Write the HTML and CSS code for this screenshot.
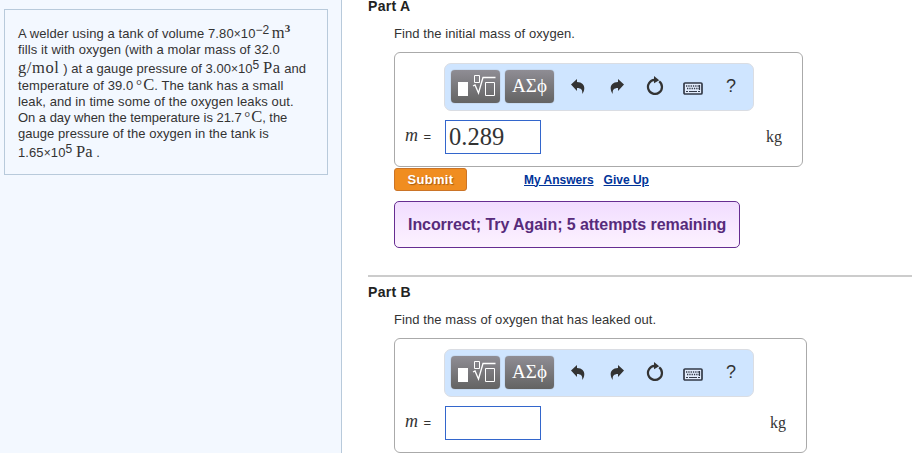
FILE: index.html
```
<!DOCTYPE html>
<html>
  <head>
    <meta charset="utf-8">
    <title>Mass of oxygen</title>
    <link rel="stylesheet" href="styles.css">
  </head>
  <body>
    <svg class="defs" width="0" height="0">
      <symbol id="template" viewBox="0 0 49 33">
        <path d="M7 12h10v14h-10z" fill="#fff"/>
        <path d="M23.500 5.500h5v7h-5zM34.500 12.500h9v13h-9z" fill="none" stroke="#fff"/>
        <path d="M22 16l2-1 3.500 8 4.500-15.500h12.500" fill="none" stroke="#fff" stroke-width="1.300"/>
      </symbol>
      <symbol id="undo" viewBox="0 0 14 15">
        <path d="M0 5.500L6 0v3c5 0 7.500 3 7.300 6.500-.1 2-.9 4-2.100 5.500.6-4-1-6-5.200-6v3z"/>
      </symbol>
      <symbol id="reset" viewBox="0 0 18 19">
        <path d="M13.200 5.300A7 7 0 1 1 8.500 3.900" fill="none" stroke="#333" stroke-width="2.200"/>
        <path d="M8 0l5.200 4.200L8 7.300z"/>
      </symbol>
      <symbol id="keyboard" viewBox="0 0 20 13">
        <rect x="1" y="1" width="18" height="11" rx="1" fill="#e2ecfc" stroke="#333a48" stroke-width="1.700"/>
        <path d="M3 4h14M4 6.500h12" stroke="#333a48" stroke-width="1.400" stroke-dasharray="1.300 1"/>
        <path d="M3 9.500h2M6 9.500h8M15 9.500h2M16.500 3v5" stroke="#333a48" stroke-width="1.200"/>
      </symbol>
    </svg>
    <div class="page">
      <div class="sidebar">
        <div class="problem">
          <div class="line l1">A welder using a tank of volume 7.80<span class="times">×</span>10<sup>−2</sup> <span class="unit">m<sup>3</sup></span></div>
          <div class="line">fills it with oxygen (with a molar mass of 32.0</div>
          <div class="line tall l3"><span class="unit">g/mol</span> ) at a gauge pressure of 3.00<span class="times">×</span>10<sup>5</sup> <span class="unit">Pa</span> and</div>
          <div class="line">temperature of 39.0 <span class="unit"><span class="deg">°</span>C</span>. The tank has a small</div>
          <div class="line l5">leak, and in time some of the oxygen leaks out.</div>
          <div class="line l6">On a day when the temperature is 21.7 <span class="unit"><span class="deg">°</span>C</span>, the</div>
          <div class="line l7">gauge pressure of the oxygen in the tank is</div>
          <div class="line tall">1.65<span class="times">×</span>10<sup>5</sup> <span class="unit">Pa</span> .</div>
        </div>
      </div>
      <div class="parts">
        <div class="part">
          <div class="title">Part A</div>
          <div class="question">Find the initial mass of oxygen.</div>
          <div class="answer">
            <div class="toolbar">
              <div class="btn"><svg width="49" height="33"><use href="#template"/></svg></div>
              <div class="btn greek">ΑΣϕ</div>
              <svg class="icon undo" width="14" height="15"><use href="#undo"/></svg>
              <svg class="icon redo" width="14" height="15"><use href="#undo"/></svg>
              <svg class="icon reset" width="18" height="19"><use href="#reset"/></svg>
              <svg class="icon keys" width="20" height="13"><use href="#keyboard"/></svg>
              <span class="help">?</span>
            </div>
            <div class="entry">
              <span class="label"><i>m</i> =</span>
              <div class="field">0.289</div>
              <span class="kg">kg</span>
            </div>
          </div>
          <div class="actions">
            <div class="submit">Submit</div>
            <a class="my-answers" href="#">My Answers</a>
            <a class="give-up" href="#">Give Up</a>
          </div>
          <div class="feedback">Incorrect; Try Again; 5 attempts remaining</div>
        </div>
        <div class="part part-b">
          <div class="title">Part B</div>
          <div class="question">Find the mass of oxygen that has leaked out.</div>
          <div class="answer wide">
            <div class="toolbar">
              <div class="btn"><svg width="49" height="33"><use href="#template"/></svg></div>
              <div class="btn greek">ΑΣϕ</div>
              <svg class="icon undo" width="14" height="15"><use href="#undo"/></svg>
              <svg class="icon redo" width="14" height="15"><use href="#undo"/></svg>
              <svg class="icon reset" width="18" height="19"><use href="#reset"/></svg>
              <svg class="icon keys" width="20" height="13"><use href="#keyboard"/></svg>
              <span class="help">?</span>
            </div>
            <div class="entry">
              <span class="label"><i>m</i> =</span>
              <div class="field"></div>
              <span class="kg">kg</span>
            </div>
          </div>
        </div>
      </div>
    </div>
  </body>
</html>
```
FILE: styles.css
```
* {
  box-sizing: border-box;
}
body {
  margin: 0;
  background-color: #FFF;
  color: #333;
  font: 13px/16px "Liberation Sans", Arial, sans-serif;
  overflow: hidden;
}
.defs {
  display: block;
}
.page {
  display: flex;
  height: 453px;
}
.sidebar {
  flex: none;
  width: 342px;
  padding: 9px 0 0 4px;
  border-right: 1px solid #B8CADB;
  background-color: #F3F8FF;
}
.problem {
  width: 324px;
  height: 166px;
  padding: 16px 0 0 13px;
  border: 1px solid #B8CADB;
}
.line {
  height: 16px;
  letter-spacing: 0.1px;
  white-space: nowrap;
}
.tall {
  height: 19px;
  padding-top: 3px;
}
.l1 { letter-spacing: 0.09px; }
.l3 {
  height: 20px;
  letter-spacing: 0.03px;
}
.l6 { letter-spacing: -0.03px; }
.l7 { letter-spacing: 0.05px; }
.line sup {
  font-size: 12px;
  letter-spacing: 0;
  line-height: 0;
  vertical-align: 4px;
}
.times {
  font-size: 12px;
}
.unit {
  font-family: "Liberation Serif", "Times New Roman", serif;
  font-size: 16.5px;
  line-height: 0;
}
.l3 .unit {
  letter-spacing: 0.6px;
}
.line .unit sup {
  font-size: 11px;
  font-weight: bold;
  vertical-align: 6px;
}
.l1 .unit {
  margin-left: -1px;
}
.deg {
  margin: 0 1px 0 -1px;
  font-size: 15px;
}
.parts {
  flex: 1;
  padding-left: 26px;
}
.part {
  height: 275px;
  padding-left: 26px;
}
.part-b {
  height: 178px;
  padding-top: 9px;
  border-top: 2px solid #CCC;
}
.title {
  margin-left: -26px;
  color: #222;
  font-size: 14px;
  font-weight: bold;
  letter-spacing: 0.3px;
  line-height: 12px;
}
.question {
  margin-top: 14px;
  letter-spacing: 0.08px;
}
.answer {
  width: 409px;
  height: 115px;
  margin-top: 10px;
  padding: 10px 0 0 49px;
  border: 1px solid #AAA;
  border-radius: 6px;
}
.wide {
  width: 413px;
}
.toolbar {
  display: flex;
  align-items: center;
  width: 310px;
  height: 48px;
  padding-left: 6px;
  border: 1px solid #DADDE3;
  border-radius: 7px;
  background-color: #CFE5FF;
}
.btn {
  width: 49px;
  height: 33px;
  margin: 0 5px 1px 0;
  border-radius: 4px;
  background-image: linear-gradient(#8F8D94, #636363);
  box-shadow: 0 0 1px #777;
}
.greek {
  color: #FFF;
  font: 19px/31px "Liberation Serif", serif;
  text-align: center;
}
.icon {
  fill: #333;
}
.undo {
  margin: 0 0 2px 12px;
}
.redo {
  margin: 0 0 2px 25px;
  transform: scaleX(-1);
}
.reset {
  margin: 0 0 3px 22px;
}
.keys {
  margin: 3px 0 0 19px;
}
.help {
  margin: 0 0 2px 23px;
  font-size: 18px;
}
.entry {
  display: flex;
  align-items: center;
  margin: 9px 0 0 -39px;
}
.label {
  width: 40px;
  margin-bottom: 2px;
  white-space: nowrap;
}
.label i {
  margin-right: 2px;
  font-family: "Liberation Serif", serif;
  font-size: 18px;
}
.field {
  width: 96px;
  height: 34px;
  padding-left: 3px;
  border: 1px solid #3366CC;
  font: 24.5px/32px "Liberation Serif", serif;
}
.kg {
  margin-left: 225px;
  font: 16px "Liberation Serif", serif;
}
.wide .kg {
  margin-left: 229px;
}
.actions {
  display: flex;
  align-items: center;
  height: 23px;
  margin-top: 1px;
}
.submit {
  width: 73px;
  height: 23px;
  border: 1px solid #CB7427;
  border-radius: 3px;
  background-color: #F08D20;
  color: #FFF;
  font-size: 13px;
  font-weight: bold;
  letter-spacing: 0.3px;
  line-height: 22px;
  text-align: center;
  text-shadow: 1px 1px 1px #A65D10;
}
.actions a {
  color: #003399;
  font-size: 12px;
  font-weight: bold;
}
.my-answers {
  margin-left: 57px;
}
.give-up {
  margin-left: 10px;
}
.feedback {
  width: 346px;
  height: 47px;
  margin-top: 10px;
  padding-left: 13px;
  border: 1px solid #662D91;
  border-radius: 5px;
  background-image: linear-gradient(#F1DCFF, #FDF3FF);
  color: #572B7B;
  font-size: 16px;
  font-weight: bold;
  letter-spacing: -0.07px;
  line-height: 45px;
  white-space: nowrap;
}
```
